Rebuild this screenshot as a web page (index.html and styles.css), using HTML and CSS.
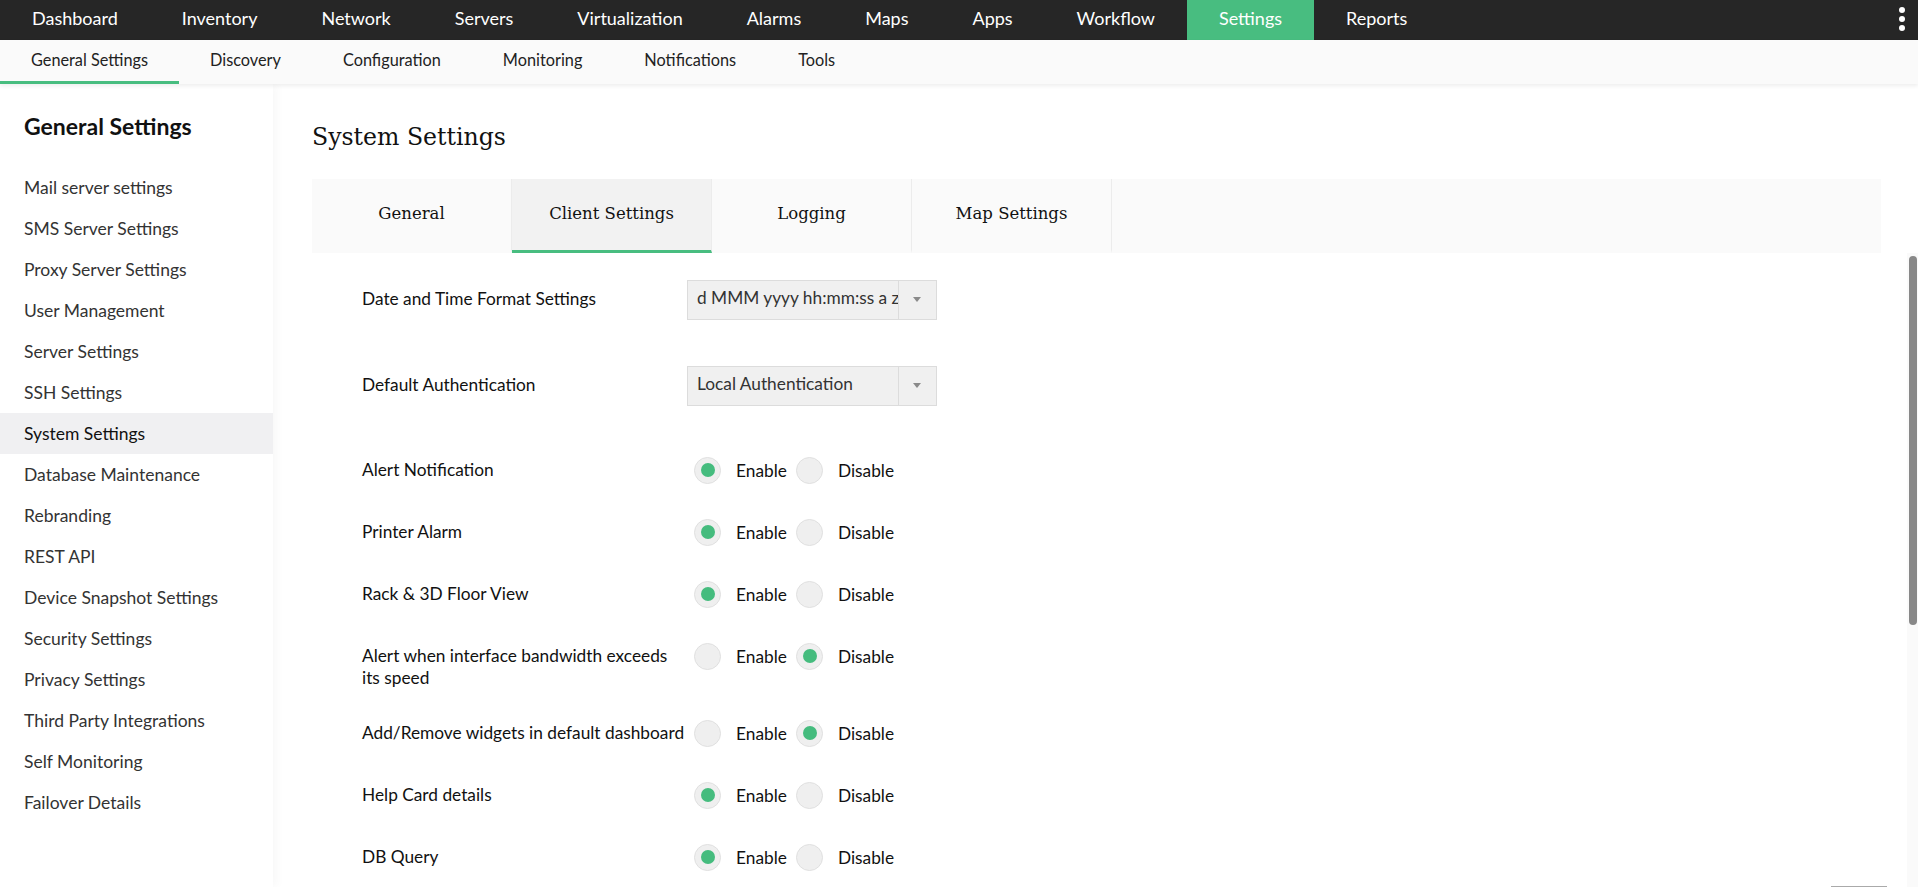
FILE: index.html
```html
<!DOCTYPE html>
<html lang="en">
<head>
<meta charset="utf-8">
<title>System Settings</title>
<link rel="stylesheet" href="styles.css">
</head>
<body>
<header class="topbar">
  <nav class="topnav">
    <a class="topnav-item">Dashboard</a>
    <a class="topnav-item">Inventory</a>
    <a class="topnav-item">Network</a>
    <a class="topnav-item">Servers</a>
    <a class="topnav-item">Virtualization</a>
    <a class="topnav-item">Alarms</a>
    <a class="topnav-item">Maps</a>
    <a class="topnav-item">Apps</a>
    <a class="topnav-item">Workflow</a>
    <a class="topnav-item active">Settings</a>
    <a class="topnav-item">Reports</a>
  </nav>
  <div class="more"><span class="dot"></span><span class="dot"></span><span class="dot"></span></div>
</header>
<nav class="subnav">
  <a class="subnav-item active">General Settings</a>
  <a class="subnav-item">Discovery</a>
  <a class="subnav-item">Configuration</a>
  <a class="subnav-item">Monitoring</a>
  <a class="subnav-item">Notifications</a>
  <a class="subnav-item">Tools</a>
</nav>
<div class="layout">
  <aside class="sidebar">
    <h2 class="sidebar-title">General Settings</h2>
    <ul class="side-list">
      <li class="side-item">Mail server settings</li>
      <li class="side-item">SMS Server Settings</li>
      <li class="side-item">Proxy Server Settings</li>
      <li class="side-item">User Management</li>
      <li class="side-item">Server Settings</li>
      <li class="side-item">SSH Settings</li>
      <li class="side-item active">System Settings</li>
      <li class="side-item">Database Maintenance</li>
      <li class="side-item">Rebranding</li>
      <li class="side-item">REST API</li>
      <li class="side-item">Device Snapshot Settings</li>
      <li class="side-item">Security Settings</li>
      <li class="side-item">Privacy Settings</li>
      <li class="side-item">Third Party Integrations</li>
      <li class="side-item">Self Monitoring</li>
      <li class="side-item">Failover Details</li>
    </ul>
  </aside>
  <main class="main">
    <div class="main-head">
      <h1 class="page-title">System Settings</h1>
      <div class="tabs">
        <div class="tab">General</div>
        <div class="tab active">Client Settings</div>
        <div class="tab">Logging</div>
        <div class="tab">Map Settings</div>
      </div>
    </div>
    <div class="form-wrap">
      <div class="form-scroll">
        <div class="form">
          <div class="row select-row">
            <div class="label">Date and Time Format Settings</div>
            <div class="select"><span class="select-text">d MMM yyyy hh:mm:ss a z</span><span class="select-arrow"></span></div>
          </div>
          <div class="row select-row">
            <div class="label">Default Authentication</div>
            <div class="select"><span class="select-text">Local Authentication</span><span class="select-arrow"></span></div>
          </div>
          <div class="row">
            <div class="label">Alert Notification</div>
            <div class="radios">
              <span class="opt"><span class="radio on"></span>Enable</span>
              <span class="opt"><span class="radio"></span>Disable</span>
            </div>
          </div>
          <div class="row">
            <div class="label">Printer Alarm</div>
            <div class="radios">
              <span class="opt"><span class="radio on"></span>Enable</span>
              <span class="opt"><span class="radio"></span>Disable</span>
            </div>
          </div>
          <div class="row">
            <div class="label">Rack &amp; 3D Floor View</div>
            <div class="radios">
              <span class="opt"><span class="radio on"></span>Enable</span>
              <span class="opt"><span class="radio"></span>Disable</span>
            </div>
          </div>
          <div class="row">
            <div class="label">Alert when interface bandwidth exceeds its speed</div>
            <div class="radios">
              <span class="opt"><span class="radio"></span>Enable</span>
              <span class="opt"><span class="radio on"></span>Disable</span>
            </div>
          </div>
          <div class="row">
            <div class="label">Add/Remove widgets in default dashboard</div>
            <div class="radios">
              <span class="opt"><span class="radio"></span>Enable</span>
              <span class="opt"><span class="radio on"></span>Disable</span>
            </div>
          </div>
          <div class="row">
            <div class="label">Help Card details</div>
            <div class="radios">
              <span class="opt"><span class="radio on"></span>Enable</span>
              <span class="opt"><span class="radio"></span>Disable</span>
            </div>
          </div>
          <div class="row">
            <div class="label">DB Query</div>
            <div class="radios">
              <span class="opt"><span class="radio on"></span>Enable</span>
              <span class="opt"><span class="radio"></span>Disable</span>
            </div>
          </div>
        </div>
      </div>
      <div class="scroll-track"><div class="scroll-thumb"></div></div>
    </div>
    <div class="float-edge"></div>
  </main>
</div>
</body>
</html>
```
FILE: styles.css
```css
* { box-sizing: border-box; }
html, body { margin: 0; padding: 0; height: 100%; }
body {
  font-family: Lato, "Open Sans", sans-serif;
  color: #222;
  background: #fff;
  overflow: hidden;
  display: flex;
  flex-direction: column;
}
a { text-decoration: none; color: inherit; }

.topbar {
  height: 40px;
  background: #262626;
  display: flex;
  align-items: stretch;
  flex: none;
}
.topnav { display: flex; }
.topnav-item {
  color: #fff;
  font-size: 18px;
  line-height: 37px;
  padding: 0 32px;
}
.topnav-item.active { background: #48bd80; }
.more {
  margin-left: auto;
  width: 6px;
  margin-right: 13px;
  display: flex;
  flex-direction: column;
  align-items: center;
  justify-content: center;
  gap: 3px;
  padding-bottom: 3px;
}
.dot { width: 6px; height: 6px; border-radius: 50%; background: #fff; }

.subnav {
  height: 44px;
  background: #fafafa;
  display: flex;
  flex: none;
  box-shadow: 0 2px 4px rgba(0,0,0,0.07);
  position: relative;
  z-index: 2;
}
.subnav-item {
  font-size: 16.3px;
  color: #222;
  line-height: 40px;
  padding: 0 31px;
  border-bottom: 3px solid transparent;
}
.subnav-item.active { border-bottom-color: #48bd80; }

.layout { flex: 1; display: flex; min-height: 0; }

.sidebar {
  width: 273px;
  flex: none;
  background: #fff;
  padding-top: 29px;
  box-shadow: 3px 0 10px rgba(0,0,0,0.035);
  position: relative;
  z-index: 1;
}
.sidebar-title {
  margin: 0 0 28px 24px;
  font-size: 23px;
  line-height: 26px;
  font-weight: 700;
  color: #111;
}
.side-list { list-style: none; margin: 0; padding: 0; }
.side-item {
  height: 41px;
  line-height: 42px;
  padding-left: 24px;
  font-size: 17.5px;
  color: #333;
}
.side-item.active { background: #f0f0f2; color: #111; }

.main {
  flex: 1;
  min-width: 0;
  display: flex;
  flex-direction: column;
  position: relative;
}
.main-head { padding: 38px 37px 0 39px; flex: none; }
.page-title {
  margin: 0 0 27px;
  font-family: "DejaVu Serif", "Liberation Serif", serif;
  font-weight: normal;
  font-size: 23.6px;
  line-height: 30px;
  color: #111;
}
.tabs {
  display: flex;
  height: 74px;
  background: #fafafa;
}
.tab {
  width: 200px;
  border-right: 1px solid #ececec;
  display: flex;
  align-items: center;
  justify-content: center;
  font-family: "DejaVu Serif", "Liberation Serif", serif;
  font-size: 16.5px;
  color: #111;
  border-bottom: 3px solid transparent;
  padding-bottom: 3px;
}
.tab.active { background: #f2f2f2; border-bottom-color: #48bd80; }

.form-wrap {
  flex: 1;
  min-height: 0;
  display: flex;
}
.form-scroll {
  flex: 1;
  min-width: 0;
  overflow: hidden;
}
.scroll-track {
  width: 11px;
  flex: none;
  background: #fafafa;
  padding: 3px 1px 0 2px;
}
.scroll-thumb {
  height: 369px;
  background: #888;
  border-radius: 4px;
}
.form {
  padding: 27px 0 0 89px;
  display: flex;
  flex-direction: column;
  gap: 26px;
}
.row { display: flex; align-items: flex-start; }
.label {
  width: 325px;
  flex: none;
  font-size: 17.3px;
  line-height: 22px;
  color: #111;
  padding-top: 7px;
}
.select-row { margin-bottom: 20px; }
.select-row .label { padding-top: 8px; }
.select {
  width: 250px;
  height: 40px;
  background: #f0f0f0;
  border: 1px solid #dcdcdc;
  display: flex;
  align-items: stretch;
}
.select-text {
  flex: 1;
  min-width: 0;
  overflow: hidden;
  white-space: nowrap;
  font-size: 17.3px;
  color: #333;
  padding-left: 9px;
  line-height: 33px;
}
.select-arrow {
  width: 38px;
  flex: none;
  border-left: 1px solid #dcdcdc;
  position: relative;
}
.select-arrow::after {
  content: "";
  position: absolute;
  left: 14px;
  top: 16px;
  border-left: 4.5px solid transparent;
  border-right: 4.5px solid transparent;
  border-top: 5px solid #8a8a8a;
}
.radios {
  height: 36px;
  display: flex;
  align-items: center;
  padding-left: 7px;
}
.opt {
  width: 102px;
  display: flex;
  align-items: center;
  font-size: 17.3px;
  color: #111;
}
.radio {
  width: 27px;
  height: 27px;
  border-radius: 50%;
  background: #efefef;
  border: 1px solid #e0e0e0;
  margin-right: 15px;
  display: flex;
  align-items: center;
  justify-content: center;
  flex: none;
}
.radio.on::after {
  content: "";
  width: 14px;
  height: 14px;
  border-radius: 50%;
  background: #45bc7e;
}
.float-edge {
  position: absolute;
  bottom: 0;
  right: 31px;
  width: 56px;
  height: 1px;
  background: #aaa;
}
```
